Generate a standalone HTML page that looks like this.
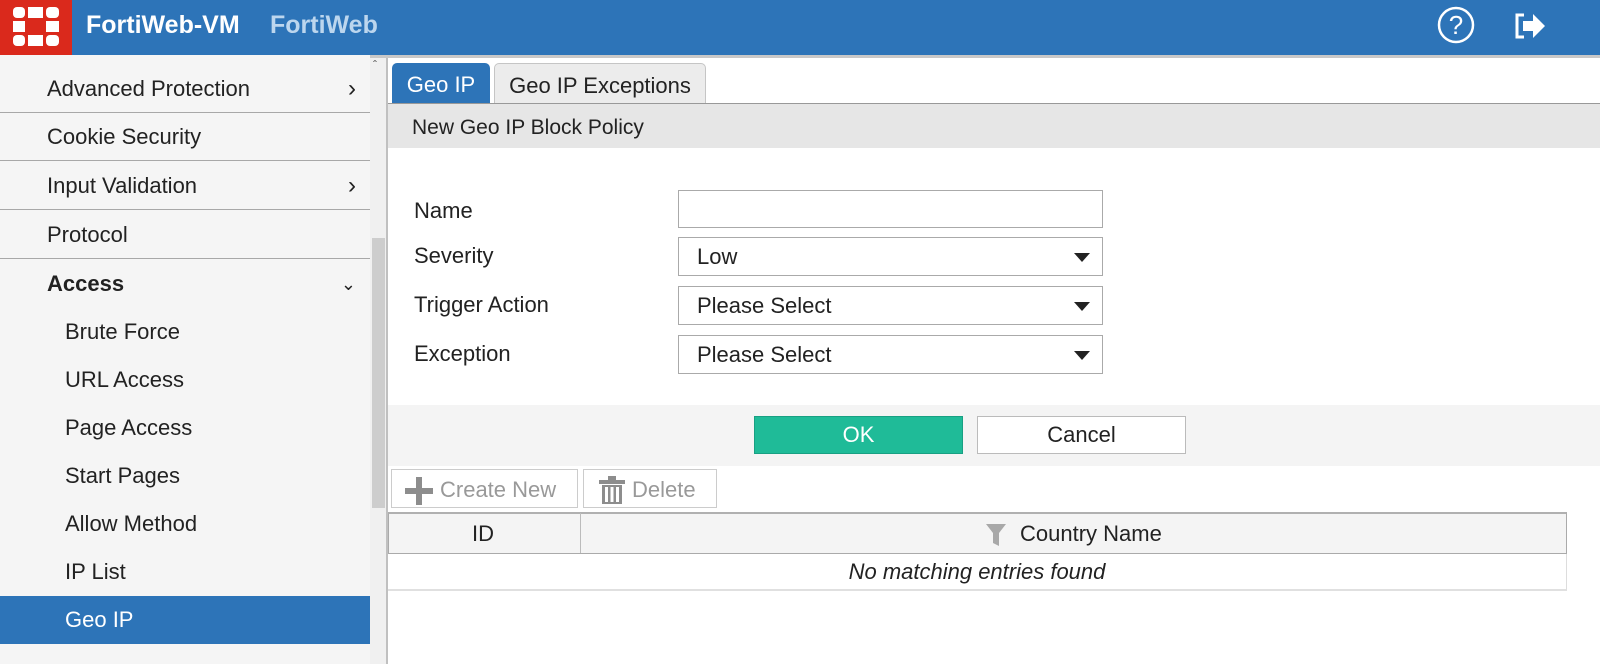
<!DOCTYPE html>
<html><head><meta charset="utf-8"><style>
*{box-sizing:border-box;margin:0;padding:0}
body{width:1600px;height:664px;overflow:hidden;background:#fff;font-family:"Liberation Sans",sans-serif;color:#222;position:relative}
.abs{position:absolute}
.hdr{left:0;top:0;width:1600px;height:55px;background:#2d74b8}
.logo{left:0;top:0;width:72px;height:55px;background:#da291c}
.side{left:0;top:55px;width:370px;height:609px;background:#f5f5f5}
.item{position:absolute;left:0;width:370px;height:48px;font-size:22px;line-height:48px;padding-left:47px;border-bottom:1px solid #a8a8a8}
.sub{position:absolute;left:0;width:370px;height:48px;font-size:22px;line-height:48px;padding-left:65px}
.chev{position:absolute;right:14px;top:0;font-size:24px}
.lbl{position:absolute;left:414px;font-size:22px}
.inp{position:absolute;left:678px;width:425px;height:39px;border:1px solid #aaa;background:#fff;font-size:22px;line-height:37px;padding-left:18px}
.tri{position:absolute;right:12px;top:15px;width:0;height:0;border-left:8px solid transparent;border-right:8px solid transparent;border-top:9px solid #222}
</style></head><body>
<div class="abs hdr"></div>
<div class="abs logo">
<svg width="72" height="55" viewBox="0 0 72 55"><g fill="#fff">
<rect x="13" y="7" width="12" height="11" rx="4"/><rect x="28" y="7" width="15" height="11"/><rect x="46" y="7" width="13" height="11" rx="4"/>
<rect x="13" y="21" width="12" height="11"/><rect x="46" y="21" width="13" height="11"/>
<rect x="13" y="35" width="12" height="11" rx="4"/><rect x="28" y="35" width="15" height="11"/><rect x="46" y="35" width="13" height="11" rx="4"/></g></svg></div>
<div class="abs" style="left:86px;top:11px;font-size:25px;font-weight:bold;color:#fff">FortiWeb-VM</div>
<div class="abs" style="left:270px;top:11px;font-size:25px;font-weight:bold;color:#bcd6ee">FortiWeb</div>
<svg class="abs" style="left:1436px;top:5px" width="40" height="40" viewBox="0 0 40 40"><circle cx="20" cy="20" r="17" fill="none" stroke="#fff" stroke-width="2.5"/><text x="20" y="29" font-size="26" fill="#fff" text-anchor="middle" font-family="Liberation Sans">?</text></svg>
<svg class="abs" style="left:1512px;top:10px" width="36" height="32" viewBox="0 0 36 32"><path d="M12 5H5v22h7" fill="none" stroke="#fff" stroke-width="3"/><path d="M11 11h10V4l12 12-12 12v-7H11z" fill="#fff"/></svg>
<div class="abs" style="left:0;top:55px;width:1600px;height:3px;background:#c8c8c8"></div>
<div class="abs side">
<div class="item" style="top:10px;height:48px">Advanced Protection<span class="chev">&#8250;</span></div>
<div class="item" style="top:58px">Cookie Security</div>
<div class="item" style="top:107px">Input Validation<span class="chev">&#8250;</span></div>
<div class="item" style="top:156px">Protocol</div>
<div class="item" style="top:205px;font-weight:bold;border:none">Access<span class="chev" style="font-weight:normal;font-size:18px">&#8964;</span></div>
<div class="sub" style="top:253px">Brute Force</div>
<div class="sub" style="top:301px">URL Access</div>
<div class="sub" style="top:349px">Page Access</div>
<div class="sub" style="top:397px">Start Pages</div>
<div class="sub" style="top:445px">Allow Method</div>
<div class="sub" style="top:493px">IP List</div>
<div class="sub" style="top:541px;background:#2d74b8;color:#fff">Geo IP</div>
</div>
<div class="abs" style="left:370px;top:58px;width:17px;height:606px;background:#f0f0f0"></div>
<div class="abs" style="left:372px;top:238px;width:13px;height:270px;background:#cdcdcd"></div>
<div class="abs" style="left:373px;top:58px;font-size:12px;color:#555">&#710;</div>
<div class="abs" style="left:386px;top:58px;width:2px;height:606px;background:#c0c0c0"></div>
<div class="abs" style="left:388px;top:58px;width:1212px;height:46px;background:#fff"></div>
<div class="abs" style="left:392px;top:63px;width:98px;height:41px;background:#2d74b8;border-radius:5px 5px 0 0;color:#fff;font-size:22px;line-height:44px;text-align:center">Geo IP</div>
<div class="abs" style="left:494px;top:63px;width:212px;height:41px;background:#ececec;border:1px solid #c5c5c5;border-bottom:none;border-radius:5px 5px 0 0;font-size:22px;line-height:44px;text-align:center">Geo IP Exceptions</div>
<div class="abs" style="left:388px;top:103px;width:1212px;height:1px;background:#999"></div>
<div class="abs" style="left:388px;top:104px;width:1212px;height:44px;background:#e6e6e6;font-size:21px;line-height:48px;padding-left:24px">New Geo IP Block Policy</div>
<div class="lbl" style="top:198px">Name</div>
<div class="lbl" style="top:243px">Severity</div>
<div class="lbl" style="top:292px">Trigger Action</div>
<div class="lbl" style="top:341px">Exception</div>
<div class="inp" style="top:190px;height:38px"></div>
<div class="inp" style="top:237px">Low<span class="tri"></span></div>
<div class="inp" style="top:286px">Please Select<span class="tri"></span></div>
<div class="inp" style="top:335px">Please Select<span class="tri"></span></div>
<div class="abs" style="left:388px;top:405px;width:1212px;height:61px;background:#f4f4f4"></div>
<div class="abs" style="left:754px;top:416px;width:209px;height:38px;background:#1fbb98;border:1px solid #18a083;color:#fff;font-size:22px;line-height:36px;text-align:center">OK</div>
<div class="abs" style="left:977px;top:416px;width:209px;height:38px;background:#fff;border:1px solid #bbb;font-size:22px;line-height:36px;text-align:center">Cancel</div>
<div class="abs" style="left:391px;top:469px;width:187px;height:39px;border:1px solid #ccc;color:#999;font-size:22px;line-height:39px;padding-left:48px">Create New</div>
<svg class="abs" style="left:405px;top:477px" width="30" height="28"><path d="M11 0h6v11h11v6H17v11h-6V17H0v-6h11z" fill="#8d8d8d"/></svg>
<div class="abs" style="left:583px;top:469px;width:134px;height:39px;border:1px solid #ccc;color:#999;font-size:22px;line-height:39px;padding-left:48px">Delete</div>
<svg class="abs" style="left:599px;top:476px" width="28" height="30" viewBox="0 0 28 30"><g fill="#8d8d8d"><rect x="0" y="4" width="26" height="4"/><rect x="9" y="0" width="8" height="4"/><path d="M3 9h20v19H3z M6 11v15h3V11z M11.5 11v15h3V11z M17 11v15h3V11z" fill-rule="evenodd"/></g></svg>
<div class="abs" style="left:388px;top:512px;width:1179px;height:42px;background:#f4f4f4;border:1px solid #aaa;border-top:2px solid #b0b0b0"></div>
<div class="abs" style="left:580px;top:513px;width:1px;height:40px;background:#bbb"></div>
<div class="abs" style="left:472px;top:521px;font-size:22px">ID</div>
<svg class="abs" style="left:986px;top:524px" width="20" height="22"><path d="M0 0h20L13 9v13l-6-3V9z" fill="#a8a8a8"/></svg>
<div class="abs" style="left:1020px;top:521px;font-size:22px">Country Name</div>
<div class="abs" style="left:388px;top:554px;width:1179px;height:37px;border-right:1px solid #ddd;border-bottom:2px solid #e0e0e0;font-size:22px;font-style:italic;text-align:center;line-height:36px">No matching entries found</div>
</body></html>
